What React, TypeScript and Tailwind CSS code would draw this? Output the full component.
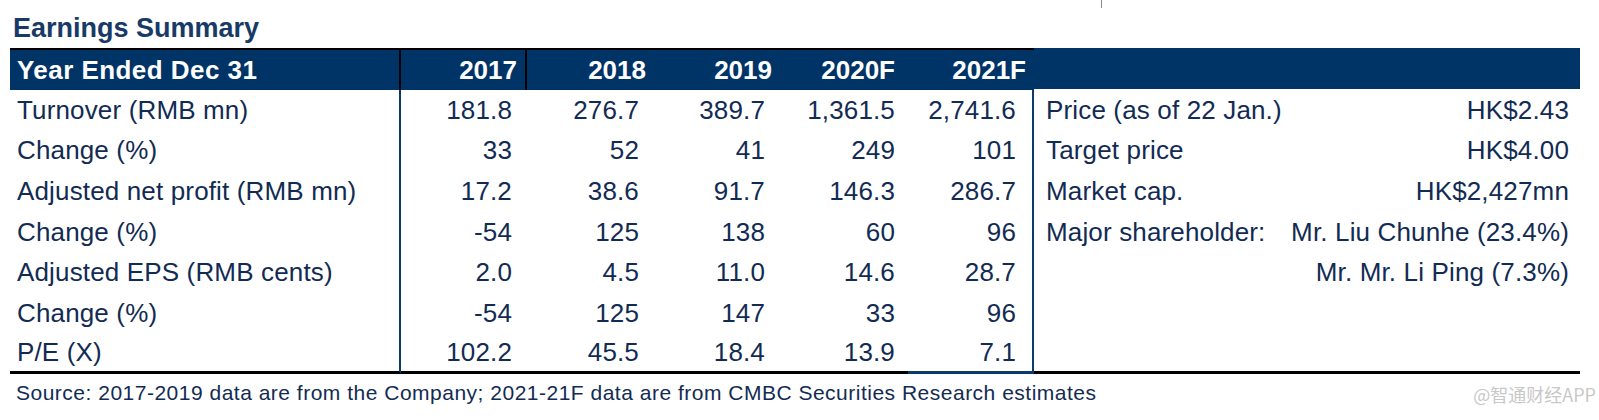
import React from "react";

const rows: { label: string; v: string[]; rl?: string; rv?: string }[] = [
  { label: "Turnover (RMB mn)", v: ["181.8", "276.7", "389.7", "1,361.5", "2,741.6"], rl: "Price (as of 22 Jan.)", rv: "HK$2.43" },
  { label: "Change (%)", v: ["33", "52", "41", "249", "101"], rl: "Target price", rv: "HK$4.00" },
  { label: "Adjusted net profit (RMB mn)", v: ["17.2", "38.6", "91.7", "146.3", "286.7"], rl: "Market cap.", rv: "HK$2,427mn" },
  { label: "Change (%)", v: ["-54", "125", "138", "60", "96"], rl: "Major shareholder:", rv: "Mr. Liu Chunhe (23.4%)" },
  { label: "Adjusted EPS (RMB cents)", v: ["2.0", "4.5", "11.0", "14.6", "28.7"], rl: "", rv: "Mr. Mr. Li Ping (7.3%)" },
  { label: "Change (%)", v: ["-54", "125", "147", "33", "96"], rl: "", rv: "" },
  { label: "P/E (X)", v: ["102.2", "45.5", "18.4", "13.9", "7.1"], rl: "", rv: "" },
];

const colW = ["w-[126px]", "w-[127px]", "w-[126px]", "w-[128px]", "w-[126px]"];
const hdrPr = ["pr-[8px]", "pr-[8px]", "pr-[8px]", "pr-[13px]", "pr-[8px]"];
const valPr = ["pr-[15px]", "pr-[15px]", "pr-[15px]", "pr-[13px]", "pr-[16px]"];
const years = ["2017", "2018", "2019", "2020F", "2021F"];

export default function App() {
  return (
    <div
      className="relative w-[1599px] h-[420px] bg-white overflow-hidden text-[#122b53]"
      style={{ fontFamily: '"Liberation Sans", Arial, sans-serif' }}
    >
      <div className="absolute left-[1101px] top-0 w-px h-[8px] bg-[#8a8a8a]" />
      <div className="pt-[12px] pl-[13px] h-[48px]">
        <div className="text-[27px] leading-[32px] font-bold text-[#183a66]">Earnings Summary</div>
      </div>
      <div className="ml-[10px] w-[1570px]">
        {/* header */}
        <div className="flex h-[42px]">
          <div className="flex border-t-2 border-black bg-[#003366] text-white font-bold text-[26px]">
            <div className="w-[391px] border-r-2 border-black pl-[7px] flex items-center tracking-[0.45px]">Year Ended Dec 31</div>
            {years.map((y, i) => (
              <div
                key={y}
                className={`${colW[i]} ${hdrPr[i]} flex items-center justify-end ${i === 0 ? "border-r-2 border-black" : ""}`}
              >
                {y}
              </div>
            ))}
          </div>
          <div className="w-[546px] h-[41px] bg-[#003366]" />
        </div>
        {/* body */}
        {rows.map((r, ri) => {
          const last = ri === rows.length - 1;
          const bb = last ? "border-b-[3px] border-black" : "";
          return (
            <div key={ri} className="flex text-[26px] tracking-[0.15px]">
              <div className={`w-[391px] h-[40.6px] border-r-2 border-r-[#0b3a6e] pl-[7px] flex items-center ${bb}`}>{r.label}</div>
              {r.v.map((v, i) => (
                <div
                  key={i}
                  className={`${colW[i]} h-[40.6px] ${valPr[i]} flex items-center justify-end ${
                    last ? (i === 4 ? "border-b-[3px] border-b-[#0b3a6e]" : "border-b-[3px] border-black") : ""
                  } ${i === 4 ? "border-r-2 border-r-[#0b3a6e]" : ""}`}
                >
                  {v}
                </div>
              ))}
              <div className={`w-[546px] h-[40.6px] pl-[12px] pr-[11px] flex items-center justify-between ${bb}`}>
                <span>{r.rl}</span>
                <span>{r.rv}</span>
              </div>
            </div>
          );
        })}
        {/* footer */}
        <div className="h-[34px] pt-[6px] pl-[6px] text-[21px] leading-[26px] tracking-[0.5px]">
          Source: 2017-2019 data are from the Company; 2021-21F data are from CMBC Securities Research estimates
        </div>
      </div>
      <div
        className="absolute right-[3px] top-[382px] text-[18px] leading-[24px] text-[#c8c8c8]"
        style={{ fontFamily: '"Noto Sans CJK SC", sans-serif' }}
      >
        @智通财经APP
      </div>
    </div>
  );
}
